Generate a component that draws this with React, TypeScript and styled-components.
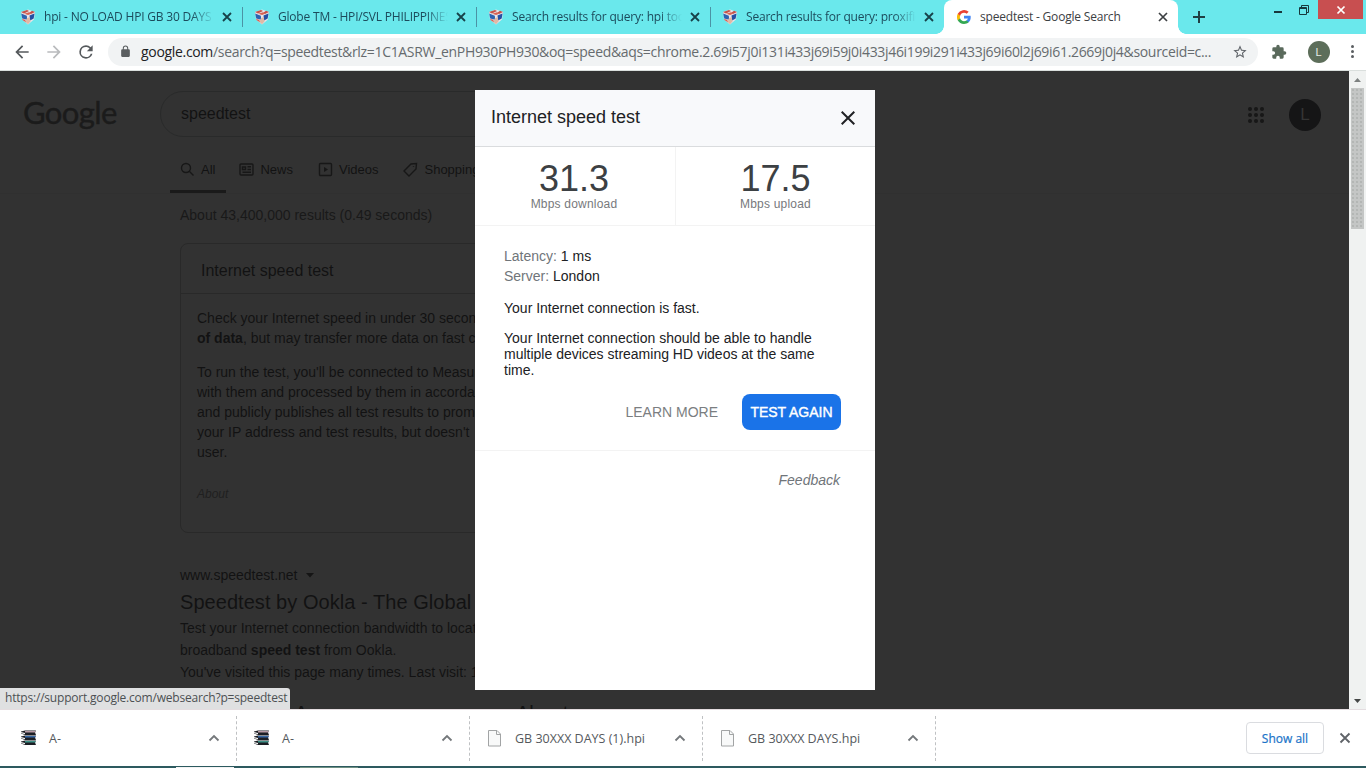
import React from 'react';
import styled, { createGlobalStyle } from 'styled-components';

const Global = createGlobalStyle`
  * { box-sizing: border-box; }
  html, body { margin: 0; padding: 0; }
  body { width: 1366px; height: 768px; overflow: hidden; }
  button { font: inherit; border: 0; background: none; padding: 0; margin: 0; }
  svg { display: block; flex: none; }
`;

const arial = `'Liberation Sans', Arial, sans-serif`;
const segoe = `'Open Sans', 'Noto Sans', sans-serif`;

const Browser = styled.div`
  width: 1366px;
  height: 768px;
  display: flex;
  flex-direction: column;
  font-family: ${segoe};
  background: #fff;
  overflow: hidden;
`;

const TabStrip = styled.div`
  height: 34px;
  flex: none;
  display: flex;
  align-items: stretch;
  padding-left: 8px;
  background: #6ae8ec;
`;

const TabItem = styled.div<{ $active?: boolean; $divider?: boolean }>`
  position: relative;
  width: 234px;
  display: flex;
  align-items: center;
  padding-left: 12px;
  background: ${p => (p.$active ? '#fff' : 'transparent')};
  border-radius: ${p => (p.$active ? '8px 8px 0 0' : '0')};
  &::after {
    content: '';
    display: ${p => (p.$divider ? 'block' : 'none')};
    position: absolute;
    right: -1px;
    top: 7px;
    width: 1px;
    height: 20px;
    background: #4b93a5;
  }
`;

const TabTitle = styled.span<{ $active?: boolean; $spacing: number }>`
  width: 172px;
  margin-left: 8px;
  font-size: 12px;
  line-height: 18px;
  letter-spacing: ${p => p.$spacing}px;
  white-space: nowrap;
  overflow: hidden;
  color: ${p => (p.$active ? '#3c4043' : '#1c4b5c')};
  -webkit-mask-image: ${p => (p.$active ? 'none' : 'linear-gradient(90deg, #000 148px, transparent 170px)')};
`;

const TabClose = styled.button`
  margin-left: 3px;
  width: 16px;
  height: 16px;
`;

const TabFoot = styled.span<{ $side: 'left' | 'right' }>`
  position: absolute;
  bottom: 0;
  ${p => p.$side}: -8px;
  width: 8px;
  height: 8px;
  background: radial-gradient(circle at ${p => (p.$side === 'left' ? '0 0' : '100% 0')}, transparent 7.5px, #fff 8px);
`;

const NewTab = styled.button`
  width: 28px;
  margin-left: 7px;
  display: flex;
  align-items: center;
  justify-content: center;
`;

const WindowButtons = styled.div`
  margin-left: auto;
  display: flex;
  align-items: flex-start;
`;

const WindowButton = styled.button<{ $close?: boolean }>`
  width: ${p => (p.$close ? 45 : 26)}px;
  height: 19px;
  display: flex;
  align-items: center;
  justify-content: center;
  background: ${p => (p.$close ? '#c84f50' : 'transparent')};
  margin-right: ${p => (p.$close ? 3 : 0)}px;
  margin-left: ${p => (p.$close ? 1 : 0)}px;
`;

const Toolbar = styled.div`
  height: 37px;
  flex: none;
  display: flex;
  align-items: center;
  padding: 0 11px 1px 12px;
  border-bottom: 1px solid #dadfdd;
`;

const NavButtons = styled.div`
  display: flex;
  gap: 12px;
  margin-right: 12px;
`;

const Omnibox = styled.div`
  width: 1150px;
  height: 28px;
  border-radius: 14px;
  background: #f1f3f4;
  display: flex;
  align-items: center;
  padding: 0 10px 0 11px;
`;

const Address = styled.span`
  flex: 1;
  margin-left: 9px;
  font-size: 14px;
  line-height: 20px;
  letter-spacing: -0.32px;
  white-space: nowrap;
  color: #666b6e;
  b { font-weight: 400; color: #202124; }
`;

const ToolbarEnd = styled.div`
  flex: 1;
  margin-left: 13px;
  display: flex;
  align-items: center;
  justify-content: space-between;
`;

const Profile = styled.div<{ $large?: boolean }>`
  width: ${p => (p.$large ? 32 : 22)}px;
  height: ${p => (p.$large ? 32 : 22)}px;
  border-radius: 50%;
  display: flex;
  align-items: center;
  justify-content: center;
  font-family: ${arial};
  font-size: ${p => (p.$large ? 17 : 11)}px;
  background: ${p => (p.$large ? '#151516' : '#5d6e5a')};
  color: ${p => (p.$large ? '#343434' : '#e8ece6')};
`;

const Viewport = styled.div`
  position: relative;
  height: 638px;
  flex: none;
  display: flex;
  overflow: hidden;
`;

const Page = styled.main`
  width: 1349px;
  height: 638px;
  overflow: hidden;
  background: #323232;
  color: #121213;
  font-family: ${arial};
  font-size: 14px;
`;

const SearchHeader = styled.header`
  height: 65px;
  padding-top: 20px;
  display: flex;
  align-items: flex-start;
`;

const Logo = styled.div`
  width: 136px;
  padding-left: 23px;
  font-family: Lato, sans-serif;
  font-size: 31px;
  line-height: 42px;
  letter-spacing: -0.6px;
  color: #1b1b1b;
  -webkit-text-stroke: 0.4px #1b1b1b;
`;

const SearchBox = styled.div`
  width: 690px;
  height: 46px;
  margin-left: 24px;
  border: 1px solid #292a2a;
  border-radius: 23px;
  padding-left: 20px;
  font-size: 16px;
  line-height: 44px;
`;

const HeaderActions = styled.div`
  margin-left: auto;
  margin-right: 28px;
  padding-top: 8px;
  display: flex;
  align-items: center;
  gap: 24px;
`;

const Filters = styled.nav`
  height: 58px;
  padding: 12px 0 0 170px;
  display: flex;
  border-bottom: 1px solid #303030;
`;

const Filter = styled.a<{ $active?: boolean; $gap: number }>`
  height: 45px;
  display: flex;
  align-items: center;
  gap: 6px;
  margin-right: ${p => p.$gap}px;
  padding: 0 11px 0 10px;
  font-size: 13px;
  border-bottom: 3px solid ${p => (p.$active ? '#1a1a1a' : 'transparent')};
`;

const Results = styled.section`
  padding-left: 180px;
`;

const ResultCount = styled.div`
  margin-top: 12px;
  line-height: 18px;
  color: #191919;
`;

const SpeedCard = styled.div`
  width: 652px;
  height: 290px;
  margin-top: 19px;
  border: 1px solid #292929;
  border-radius: 8px;
`;

const SpeedCardTitle = styled.div`
  height: 50px;
  padding: 3px 0 0 20px;
  font-size: 16px;
  line-height: 47px;
  border-bottom: 1px solid #292929;
`;

const SpeedCardText = styled.p`
  margin: 14px 0 0 16px;
  line-height: 20px;
  white-space: nowrap;
`;

const SpeedCardAbout = styled.div`
  margin: 24px 0 0 16px;
  font-size: 12px;
  line-height: 16px;
  font-style: italic;
  color: #202020;
`;

const ResultUrl = styled.div`
  margin-top: 33px;
  line-height: 18px;
  display: flex;
  align-items: center;
  gap: 8px;
`;

const ResultTitle = styled.div`
  margin-top: 4px;
  font-size: 20px;
  line-height: 28px;
  letter-spacing: 0.05px;
  white-space: nowrap;
`;

const ResultText = styled.p`
  margin: 1px 0 0;
  line-height: 22px;
  white-space: nowrap;
`;

const SiteLinks = styled.div`
  margin: 17px 0 0 20px;
  display: grid;
  grid-template-columns: 316px 316px;
  font-size: 20px;
  line-height: 26px;
`;

const Scrollbar = styled.div`
  width: 17px;
  height: 638px;
  background: #f0f2f1;
  display: flex;
  flex-direction: column;
  align-items: center;
`;

const ScrollArrow = styled.div`
  height: 17px;
  display: flex;
  align-items: center;
  justify-content: center;
`;

const ScrollThumb = styled.div`
  width: 13px;
  height: 141px;
  margin-bottom: auto;
  background-color: #c4c6c5;
  background-image: radial-gradient(#b3b6b4 0.7px, transparent 0.9px);
  background-size: 4px 4px;
`;

const Dialog = styled.div`
  position: absolute;
  left: 475px;
  top: 19px;
  width: 400px;
  height: 600px;
  background: #fff;
  font-family: ${arial};
  font-size: 14px;
  color: #202124;
`;

const DialogHeader = styled.div`
  height: 57px;
  display: flex;
  align-items: center;
  justify-content: space-between;
  padding: 0 20px 1px 16px;
  background: #f8f9fb;
  border-bottom: 1px solid #dadcde;
  font-size: 18px;
`;

const Stats = styled.div`
  height: 79px;
  display: grid;
  grid-template-columns: 201px 199px;
  border-bottom: 1px solid #f3f3f3;
`;

const Stat = styled.div`
  padding-top: 13px;
  display: flex;
  flex-direction: column;
  align-items: center;
  font-size: 12px;
  line-height: 14px;
  letter-spacing: 0.2px;
  color: #77797c;
  & + & { border-left: 0; }
  &:first-child { border-right: 1px solid #f3f3f3; padding-right: 2px; }
  strong {
    font-weight: 400;
    font-size: 36px;
    line-height: 37px;
    letter-spacing: 0;
    color: #3c4043;
  }
`;

const Details = styled.div`
  height: 225px;
  padding: 20px 34px 0 29px;
  border-bottom: 1px solid #f3f3f3;
`;

const Fact = styled.div`
  line-height: 20px;
  color: #202124;
  span { color: #70757a; }
`;

const Verdict = styled.p<{ $top: number }>`
  margin: ${p => p.$top}px 0 0;
  line-height: 16px;
`;

const DialogActions = styled.div`
  margin-top: 16px;
  display: flex;
  justify-content: flex-end;
  align-items: center;
  gap: 24px;
`;

const LearnMore = styled.a`
  color: #7b7e81;
`;

const TestAgain = styled.button`
  width: 99px;
  height: 36px;
  border-radius: 8px;
  background: #1a73e8;
  color: #fff;
  font-size: 14px;
  white-space: nowrap;
  -webkit-text-stroke: 0.4px #fff;
`;

const Feedback = styled.div`
  margin: 20px 35px 0 0;
  text-align: right;
  line-height: 18px;
  font-style: italic;
  color: #70757a;
`;

const StatusBubble = styled.div`
  position: absolute;
  left: 0;
  bottom: 0;
  width: 290px;
  height: 21px;
  padding-left: 5px;
  border-radius: 0 3px 0 0;
  background: #dfe0e1;
  color: #4c5053;
  font-size: 12px;
  line-height: 20px;
  letter-spacing: -0.2px;
  white-space: nowrap;
`;

const Downloads = styled.div`
  height: 57px;
  flex: none;
  display: flex;
  align-items: center;
  border-top: 1px solid #e4dde0;
`;

const DownloadItem = styled.div<{ $first?: boolean }>`
  width: ${p => (p.$first ? 237 : 233)}px;
  height: 45px;
  padding: 0 16px 0 ${p => (p.$first ? 20 : 16)}px;
  display: flex;
  align-items: center;
  border-right: 1px dashed #bfc1c3;
`;

const FileName = styled.span<{ $spacing?: number }>`
  flex: 1;
  margin-left: 12px;
  font-size: 12.5px;
  letter-spacing: ${p => p.$spacing ?? 0}px;
  color: #55595d;
  white-space: nowrap;
`;

const ShowAll = styled.button`
  width: 78px;
  height: 32px;
  margin: 0 12px 0 auto;
  border: 1px solid #dadce0;
  border-radius: 4px;
  font-size: 12px;
  color: #1a73c8;
  -webkit-text-stroke: 0.2px #1a73c8;
`;

const CloseShelf = styled.button`
  margin-right: 12px;
`;

const Taskbar = styled.div`
  height: 2px;
  flex: none;
  display: flex;
  padding-left: 176px;
  gap: 66px;
  background: #2d5a5f;
`;

const TaskButton = styled.span<{ $color: string }>`
  width: 58px;
  height: 1px;
  margin-top: 1px;
  background: ${p => p.$color};
`;

const Cross = ({ size, color, width }: { size: number; color: string; width: number }) => (
  <svg width={size} height={size} viewBox="0 0 16 16" stroke={color} strokeWidth={width} fill="none">
    <path d="M4 4l8 8M12 4l-8 8" />
  </svg>
);

const BoxIcon = () => (
  <svg width="16" height="16" viewBox="0 0 16 16">
    <path d="M1 3l7-2.5L15 3l-1 7.5L8 15.5 2 10.5z" fill="#e9e5ea" />
    <path d="M1 3l6-2 2 1-5 2.5zM9 4l3-2.3L15 3l-4 2z" fill="#c4534a" />
    <path d="M1.2 4.6l5.6 2.2.4 4L2.2 9.6z" fill="#2c62b0" />
    <path d="M9.5 6.6l5-2.2-.8 5.2-3.6 2z" fill="#2450a4" />
    <path d="M4.2 4.7L9 3.3l2.3 1.5-3.2 1.3zM2.2 10l3 .8 1 2.8-3.8-2.6z" fill="#d76252" />
    <path d="M6.7 9.5l3-1.5.8 4.5L8 15.3 5.6 13z" fill="#dfb9a5" />
  </svg>
);

const GoogleIcon = () => (
  <svg width="14" height="14" viewBox="0 0 24 24" style={{ margin: 1 }}>
    <path fill="#4285f4" d="M23.5 12.3c0-.8-.1-1.6-.2-2.3H12v4.5h6.5c-.3 1.500-1.100 2.800-2.400 3.600v3h3.900c2.200-2.100 3.500-5.100 3.500-8.800z" />
    <path fill="#34a853" d="M12 24c3.200 0 6-1.100 8-2.900l-3.900-3c-1.100.7-2.500 1.200-4.100 1.200-3.100 0-5.800-2.100-6.700-5h-4v3.100C3.300 21.300 7.300 24 12 24z" />
    <path fill="#fbbc05" d="M5.300 14.300a7.200 7.200 0 0 1 0-4.600V6.600h-4a12 12 0 0 0 0 10.800z" />
    <path fill="#ea4335" d="M12 4.800c1.800 0 3.300.6 4.600 1.800L20 3.100A12 12 0 0 0 1.300 6.600l4 3.100c.9-2.900 3.600-4.900 6.700-4.900z" />
  </svg>
);

const BooksIcon = () => (
  <svg width="17" height="17" viewBox="0 0 17 17">
    {['#b79aa5', '#3767a5', '#3d9187'].map((color, i) => (
      <g key={color} transform={`translate(0 ${i * 5})`}>
        <path d="M1 1.500L5 .5h11l-1 2 1 2.500H5L1 3.500z" fill="#1c1e24" />
        <path d="M5 1h10.500v1.500H5z" fill={color} />
        <path d="M1 2l4 1v1.300L1 3.200z" fill="#f5f5f5" />
      </g>
    ))}
  </svg>
);

const FileIcon = () => (
  <svg width="17" height="17" viewBox="0 0 17 17">
    <path d="M2.500.5h8.500l3.500 3.500v12h-12z" fill="#f8f9f9" stroke="#a2a4a5" />
    <path d="M10.500.5v4h4" fill="none" stroke="#a2a4a5" />
  </svg>
);

const Caret = () => (
  <svg width="12" height="8" viewBox="0 0 12 8" fill="none" stroke="#74787b" strokeWidth="1.8">
    <path d="M1.500 6.500L6 2l4.500 4.500" />
  </svg>
);

const material = {
  back: 'M20 11H7.830l5.590-5.590L12 4l-8 8 8 8 1.410-1.410L7.830 13H20v-2z',
  forward: 'M12 4l-1.410 1.410L16.170 11H4v2h12.170l-5.580 5.590L12 20l8-8z',
  reload: 'M17.650 6.350A7.960 7.960 0 0 0 12 4a8 8 0 1 0 7.730 10h-2.080A6 6 0 1 1 12 6c1.660 0 3.140.69 4.220 1.780L13 11h7V4z',
  lock: 'M18 8h-1V6A5 5 0 0 0 7 6v2H6a2 2 0 0 0-2 2v10c0 1.100.9 2 2 2h12a2 2 0 0 0 2-2V10a2 2 0 0 0-2-2zM8.900 8V6a3.100 3.100 0 0 1 6.200 0v2z',
  star: 'M22 9.240l-7.190-.62L12 2 9.190 8.630 2 9.240l5.460 4.730L5.820 21 12 17.270 18.180 21l-1.630-7.030zM12 15.400l-3.760 2.270 1-4.280-3.320-2.880 4.380-.38L12 6.100l1.710 4.040 4.380.38-3.320 2.880 1 4.280z',
  puzzle: 'M20.500 11H19V7a2 2 0 0 0-2-2h-4V3.500a2.500 2.500 0 0 0-5 0V5H4a2 2 0 0 0-2 2v3.800h1.500a2.700 2.700 0 0 1 0 5.400H2V20c0 1.100.9 2 2 2h3.800v-1.500a2.700 2.700 0 0 1 5.400 0V22H17a2 2 0 0 0 2-2v-4h1.500a2.500 2.500 0 0 0 0-5z',
};

const Material = ({ d, size, color }: { d: string; size: number; color: string }) => (
  <svg width={size} height={size} viewBox="0 0 24 24" fill={color}><path d={d} /></svg>
);

const Dots = ({ columns, pitch, radius, color }: { columns: number; pitch: number; radius: number; color: string }) => (
  <svg width={columns * pitch} height={3 * pitch} fill={color}>
    {Array.from({ length: columns * 3 }, (_, i) => (
      <circle key={i} cx={(i % columns + 0.5) * pitch} cy={(Math.floor(i / columns) + 0.5) * pitch} r={radius} />
    ))}
  </svg>
);

const Outline = ({ children }: { children: React.ReactNode }) => (
  <svg width="15" height="15" viewBox="0 0 15 15" fill="none" stroke="#171717" strokeWidth="1.4">{children}</svg>
);

const tabs = [
  { title: 'hpi - NO LOAD HPI GB 30 DAYS', spacing: -0.2 },
  { title: 'Globe TM - HPI/SVL PHILIPPINES', spacing: -0.2 },
  { title: 'Search results for query: hpi tool', spacing: -0.2 },
  { title: 'Search results for query: proxifier', spacing: -0.2 },
];

export default function App() {
  return (
    <Browser>
      <Global />
      <TabStrip>
        {tabs.map((tab, i) => (
          <TabItem key={tab.title} $divider={i < 3}>
            <BoxIcon />
            <TabTitle $spacing={tab.spacing}>{tab.title}</TabTitle>
            <TabClose><Cross size={16} color="#174249" width={1.8} /></TabClose>
          </TabItem>
        ))}
        <TabItem $active>
          <TabFoot $side="left" />
          <GoogleIcon />
          <TabTitle $active $spacing={-0.2}>speedtest - Google Search</TabTitle>
          <TabClose><Cross size={16} color="#3c4043" width={1.7} /></TabClose>
          <TabFoot $side="right" />
        </TabItem>
        <NewTab>
          <svg width="14" height="14" stroke="#203f43" strokeWidth="2"><path d="M7 1v12M1 7h12" /></svg>
        </NewTab>
        <WindowButtons>
          <WindowButton>
            <svg width="10" height="10" stroke="#17383c" strokeWidth="2"><path d="M1 7h8" /></svg>
          </WindowButton>
          <WindowButton>
            <svg width="10" height="10" stroke="#17383c" fill="none"><path d="M.5 2.500h7v7h-7zM.5 3.500h7M2.500 2V.5h7v7H8" /></svg>
          </WindowButton>
          <WindowButton $close><Cross size={14} color="#fff" width={2} /></WindowButton>
        </WindowButtons>
      </TabStrip>
      <Toolbar>
        <NavButtons>
          <Material d={material.back} size={20} color="#55595c" />
          <Material d={material.forward} size={20} color="#b9bbbd" />
          <Material d={material.reload} size={20} color="#55595c" />
        </NavButtons>
        <Omnibox>
          <Material d={material.lock} size={13} color="#5a5e60" />
          <Address>
            <b>google.com</b>/search?q=speedtest&amp;rlz=1C1ASRW_enPH930PH930&amp;oq=speed&amp;aqs=chrome.2.69i57j0i131i433j69i59j0i433j46i199i291i433j69i60l2j69i61.2669j0j4&amp;sourceid=c...
          </Address>
          <Material d={material.star} size={16} color="#5f6368" />
        </Omnibox>
        <ToolbarEnd>
          <Material d={material.puzzle} size={16} color="#5a6a5c" />
          <Profile>L</Profile>
          <Dots columns={1} pitch={5} radius={1.5} color="#5a5e61" />
        </ToolbarEnd>
      </Toolbar>
      <Viewport>
        <Page>
          <SearchHeader>
            <Logo>Google</Logo>
            <SearchBox>speedtest</SearchBox>
            <HeaderActions>
              <Dots columns={3} pitch={6} radius={2} color="#171717" />
              <Profile $large>L</Profile>
            </HeaderActions>
          </SearchHeader>
          <Filters>
            <Filter $active $gap={3}>
              <Outline><circle cx="6" cy="6" r="4.500" /><path d="M9.300 9.300l4.200 4.200" /></Outline>
              All
            </Filter>
            <Filter $gap={4}>
              <Outline><rect x="1" y="2" width="13" height="11" rx="1" /><path d="M3.500 5h3v2.500h-3zM8.500 4.700H12M8.500 7.500H12M3.500 10.300H12" /></Outline>
              News
            </Filter>
            <Filter $gap={4}>
              <Outline><rect x="1.500" y="1.500" width="12" height="12" rx="1" /><path d="M6 5v5l4-2.500z" fill="#171717" stroke="none" /></Outline>
              Videos
            </Filter>
            <Filter $gap={0}>
              <Outline><path d="M1 9l7-7 5.500-.5L13 7l-7 7zM10.500 4.300v.8" /></Outline>
              Shopping
            </Filter>
          </Filters>
          <Results>
            <ResultCount>About 43,400,000 results (0.49 seconds)</ResultCount>
            <SpeedCard>
              <SpeedCardTitle>Internet speed test</SpeedCardTitle>
              <SpeedCardText>
                Check your Internet speed in under 30 seconds.<br />
                <b>of data</b>, but may transfer more data on fast connections.
              </SpeedCardText>
              <SpeedCardText>
                To run the test, you'll be connected to Measurement Lab<br />
                with them and processed by them in accordance<br />
                and publicly publishes all test results to promote<br />
                your IP address and test results, but doesn't<br />
                user.
              </SpeedCardText>
              <SpeedCardAbout>About</SpeedCardAbout>
            </SpeedCard>
            <ResultUrl>
              www.speedtest.net
              <svg width="8" height="5" fill="#151515"><path d="M0 0h8L4 4.500z" /></svg>
            </ResultUrl>
            <ResultTitle>Speedtest by Ookla - The Global Broadband</ResultTitle>
            <ResultText>
              Test your Internet connection bandwidth to locations<br />
              broadband <b>speed test</b> from Ookla.<br />
              You've visited this page many times. Last visit: 1
            </ResultText>
            <SiteLinks>
              <span>Speedtest Apps</span>
              <span>About</span>
            </SiteLinks>
          </Results>
        </Page>
        <Scrollbar>
          <ScrollArrow><svg width="7" height="4" fill="#7d8180"><path d="M0 4h7L3.500 0z" /></svg></ScrollArrow>
          <ScrollThumb />
          <ScrollArrow><svg width="7" height="4" fill="#444746"><path d="M0 0h7L3.500 4z" /></svg></ScrollArrow>
        </Scrollbar>
        <Dialog>
          <DialogHeader>
            Internet speed test
            <svg width="14" height="14" stroke="#202124" strokeWidth="2"><path d="M.7.7l12.600 12.600M13.300.7L.7 13.300" /></svg>
          </DialogHeader>
          <Stats>
            <Stat><strong>31.3</strong>Mbps download</Stat>
            <Stat><strong>17.5</strong>Mbps upload</Stat>
          </Stats>
          <Details>
            <Fact><span>Latency:</span> 1 ms</Fact>
            <Fact><span>Server:</span> London</Fact>
            <Verdict $top={14}>Your Internet connection is fast.</Verdict>
            <Verdict $top={14}>
              Your Internet connection should be able to handle multiple devices streaming HD videos at the same time.
            </Verdict>
            <DialogActions>
              <LearnMore>LEARN MORE</LearnMore>
              <TestAgain>TEST AGAIN</TestAgain>
            </DialogActions>
          </Details>
          <Feedback>Feedback</Feedback>
        </Dialog>
        <StatusBubble>https://support.google.com/websearch?p=speedtest</StatusBubble>
      </Viewport>
      <Downloads>
        <DownloadItem $first><BooksIcon /><FileName>A-</FileName><Caret /></DownloadItem>
        <DownloadItem><BooksIcon /><FileName>A-</FileName><Caret /></DownloadItem>
        <DownloadItem><FileIcon /><FileName>GB 30XXX DAYS (1).hpi</FileName><Caret /></DownloadItem>
        <DownloadItem><FileIcon /><FileName>GB 30XXX DAYS.hpi</FileName><Caret /></DownloadItem>
        <ShowAll>Show all</ShowAll>
        <CloseShelf><Cross size={18} color="#5f6368" width={1.6} /></CloseShelf>
      </Downloads>
      <Taskbar>
        <TaskButton $color="#f3f3f3" />
        <TaskButton $color="#6f9083" />
      </Taskbar>
    </Browser>
  );
}
